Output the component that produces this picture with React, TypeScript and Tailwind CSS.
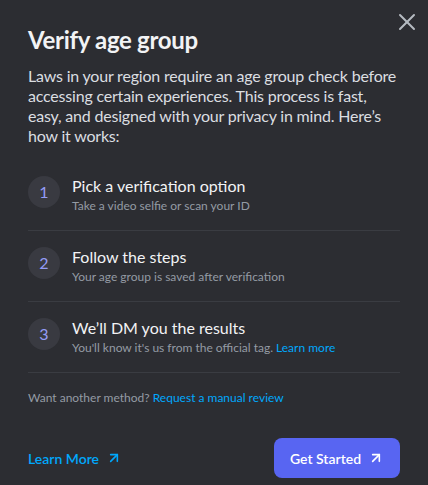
import { X, ArrowUpRight } from 'lucide-react'

const steps = [
  { n: 1, title: 'Pick a verification option', sub: 'Take a video selfie or scan your ID' },
  { n: 2, title: 'Follow the steps', sub: 'Your age group is saved after verification' },
  { n: 3, title: 'We\u2019ll DM you the results', sub: "You'll know it's us from the official tag.", link: 'Learn more' },
]

export default function App() {
  return (
    <div
      className="w-[428px] h-[485px] bg-[#2c2d32] text-[#dbdee1] relative overflow-hidden"
      style={{ fontFamily: 'Lato, "Noto Sans", sans-serif' }}
    >
      <button className="absolute top-[8px] left-[393px] text-[#b5bac1]">
        <X size={28} strokeWidth={1.7} />
      </button>

      <div className="px-[28px] pt-[25px]">
        <h1 className="text-[24px] leading-[30px] font-bold text-[#f2f3f5] tracking-[-0.3px]">Verify age group</h1>
        <p className="mt-[11px] text-[16px] leading-[20px] text-[#dbdee1] tracking-[-0.2px]">
          Laws in your region require an age group check before accessing certain experiences. This process is fast,
          easy, and designed with your privacy in mind. Here’s how it works:
        </p>

        <div className="mt-[14px]">
          {steps.map((s) => (
            <div key={s.n} className="flex items-start gap-[12px] h-[71px] pt-[16px] border-b border-[#3a3c42]">
              <div className="w-[32px] h-[32px] rounded-full bg-[#393a41] flex items-center justify-center text-[16px] text-[#949cf7] shrink-0">
                {s.n}
              </div>
              <div>
                <div className="text-[16px] leading-[20px] text-[#f2f3f5]">{s.title}</div>
                <div className="text-[12px] leading-[16px] text-[#949ba4] mt-[2px]">
                  {s.sub}
                  {s.link && <span className="text-[#00a8fc]"> {s.link}</span>}
                </div>
              </div>
            </div>
          ))}
        </div>

        <p className="mt-[17px] text-[12px] leading-[16px] text-[#949ba4]">
          Want another method? <span className="text-[#00a8fc]">Request a manual review</span>
        </p>

        <div className="mt-[32px] flex items-center justify-between">
          <button className="flex items-center gap-[7px] text-[14px] font-semibold text-[#00a8fc]">
            Learn More <ArrowUpRight size={16} strokeWidth={2.4} />
          </button>
          <button className="w-[126px] h-[40px] rounded-[8px] bg-[#5865f2] text-white text-[14px] font-semibold flex items-center justify-center gap-[7px]">
            Get Started <ArrowUpRight size={16} strokeWidth={2.4} />
          </button>
        </div>
      </div>
    </div>
  )
}
